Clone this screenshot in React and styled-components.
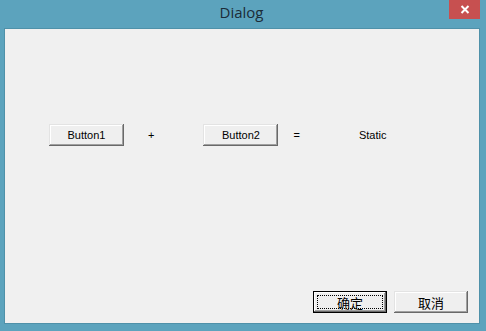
import React from 'react';
import styled, { createGlobalStyle } from 'styled-components';

const Global = createGlobalStyle`
  html, body {
    margin: 0;
    padding: 0;
    width: 486px;
    height: 331px;
    overflow: hidden;
  }
`;

const Window = styled.div`
  display: flex;
  flex-direction: column;
  width: 486px;
  height: 331px;
  background: #5ca3bd;
`;

const TitleBar = styled.div`
  display: grid;
  grid-template-columns: 1fr auto 1fr;
  height: 29px;
  flex: none;
`;

const Title = styled.div`
  grid-column: 2;
  align-self: start;
  padding-top: 2px;
  padding-right: 3px;
  font-family: 'Open Sans', 'Noto Sans', sans-serif;
  font-size: 15px;
  line-height: 20px;
  color: #1b2c38;
`;

const CloseBtn = styled.div`
  grid-column: 3;
  justify-self: end;
  align-self: start;
  margin-right: 6px;
  width: 31px;
  height: 19px;
  background: #c75050;
  display: flex;
  align-items: center;
  justify-content: center;
`;

const Client = styled.div`
  flex: 1;
  display: flex;
  flex-direction: column;
  margin: 0 7px 8px 5px;
  background: #f0f0f0;
  box-shadow: 0 0 0 1px #4f91a9;
`;

const Row = styled.div`
  display: flex;
  align-items: center;
  height: 22px;
  margin-top: 95px;
  padding-left: 44px;
`;

const PushButton = styled.div`
  box-sizing: border-box;
  width: ${(p) => p.$width || 75}px;
  height: 22px;
  display: flex;
  align-items: center;
  justify-content: center;
  background: #efefef;
  font-family: ${(p) =>
    p.$cjk ? "'Noto Sans CJK SC', sans-serif" : "'Liberation Sans', Arial, sans-serif"};
  font-size: ${(p) => (p.$cjk ? 13 : 11)}px;
  color: #000;
  position: relative;
  box-shadow: ${(p) =>
    p.$default
      ? 'inset 0 0 0 1px #000, inset -2px -2px #696969, inset 2px 2px #fff, inset -3px -3px #a0a0a0'
      : 'inset -1px -1px #696969, inset 1px 1px #e3e3e3, inset -2px -2px #a0a0a0, inset 2px 2px #fff'};
`;

const Focus = styled.div`
  position: absolute;
  inset: 4px;
  border: 1px dotted #000;
`;

const Sign = styled.span`
  margin-left: ${(p) => p.$gap}px;
  font-family: 'Liberation Sans', Arial, sans-serif;
  font-size: 11px;
  color: #000;
`;

const Spaced = styled.div`
  margin-left: ${(p) => p.$gap}px;
`;

const Footer = styled.div`
  margin-top: auto;
  display: flex;
  justify-content: flex-end;
  gap: 7px;
  padding: 0 11px 10px 0;
`;

export default function App() {
  return (
    <>
      <Global />
      <Window>
        <TitleBar>
          <Title>Dialog</Title>
          <CloseBtn>
            <svg width="10" height="9" viewBox="0 0 10 9">
              <path d="M1.5 1 L8.5 8 M8.5 1 L1.5 8" stroke="#fff" strokeWidth="2" />
            </svg>
          </CloseBtn>
        </TitleBar>
        <Client>
          <Row>
            <PushButton>Button1</PushButton>
            <Sign $gap={24}>+</Sign>
            <Spaced $gap={49}>
              <PushButton>Button2</PushButton>
            </Spaced>
            <Sign $gap={15}>=</Sign>
            <Sign $gap={59}>Static</Sign>
          </Row>
          <Footer>
            <PushButton $width={74} $cjk $default>
              <Focus />
              确定
            </PushButton>
            <PushButton $width={74} $cjk>取消</PushButton>
          </Footer>
        </Client>
      </Window>
    </>
  );
}
